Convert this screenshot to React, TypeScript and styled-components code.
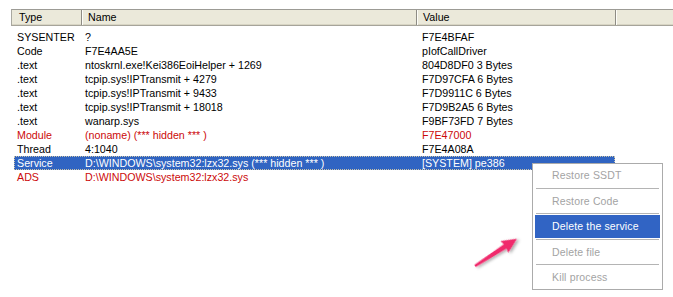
import React from "react";
import styled, { createGlobalStyle } from "styled-components";

const GlobalStyle = createGlobalStyle`
  html, body { margin: 0; padding: 0; background: #ffffff; }
  body { font-family: "Liberation Sans", Arial, sans-serif; }
`;

const Page = styled.div`
  position: relative;
  width: 673px;
  height: 297px;
  overflow: hidden;
  padding-top: 9px;
  box-sizing: border-box;
  background: #fff;
`;

const Header = styled.div`
  display: flex;
  margin-left: 11px;
  height: 15px;
  border-top: 1px solid #9c9b95;
  border-left: 1px solid #a9a8a0;
  border-bottom: 1px solid #a6a49a;
  background: #ebe9da;
  box-shadow: inset 0 -1px 0 #d8d5c4;
`;

const HeaderCell = styled.div<{ $w?: number }>`
  box-sizing: border-box;
  ${(p) => (p.$w ? `width: ${p.$w}px; flex: none;` : "flex: 1;")}
  padding-left: ${(p) => (p.$w === 70 ? 7 : 6)}px;
  font-size: 10.7px;
  line-height: 15px;
  color: #000;
  border-right: ${(p) => (p.$w ? "1px solid #8e8c84" : "none")};
  box-shadow: ${(p) => (p.$w ? "1px 0 0 #fdfdf8" : "none")};
  position: relative;
`;

const Body = styled.div`
  display: flex;
  flex-direction: column;
  padding-top: 4px;
  margin-left: 14px;
  width: 601px;
`;

const Row = styled.div<{ $sel?: boolean; $red?: boolean }>`
  display: grid;
  grid-template-columns: 68px 337px 196px;
  height: 14px;
  line-height: 14px;
  font-size: 10.7px;
  background: ${(p) => (p.$sel ? "#3064c2" : "transparent")};
  color: ${(p) => (p.$sel ? "#fff" : p.$red ? "#cc0a0a" : "#000")};
  outline: ${(p) => (p.$sel ? "1px dotted #c9c3a8" : "none")};
  outline-offset: -1px;
  white-space: nowrap;
`;

const Cell = styled.div`
  padding-left: 3px;
  overflow: visible;
`;

const Menu = styled.div`
  position: absolute;
  left: 532px;
  top: 163px;
  width: 131px;
  box-sizing: border-box;
  background: #fff;
  border: 1px solid #ababab;
  padding: 0 2px;
  display: flex;
  flex-direction: column;
`;

const MenuItem = styled.div<{ $active?: boolean }>`
  height: 22.5px;
  line-height: 22.5px;
  padding-left: 17px;
  font-size: 10.5px;
  letter-spacing: 0.15px;
  color: ${(p) => (p.$active ? "#fff" : "#a3a3a3")};
  background: ${(p) => (p.$active ? "#3164c4" : "transparent")};
  white-space: nowrap;
`;

const Separator = styled.div`
  height: 1px;
  margin: 1px 1px;
  background: #b4b4b4;
`;

const ArrowSvg = styled.svg`
  position: absolute;
  left: 468px;
  top: 230px;
  overflow: visible;
`;

type R = { t: string; n: string; v: string; red?: boolean; sel?: boolean };

const rows: R[] = [
  { t: "SYSENTER", n: "?", v: "F7E4BFAF" },
  { t: "Code", n: "F7E4AA5E", v: "pIofCallDriver" },
  { t: ".text", n: "ntoskrnl.exe!Kei386EoiHelper + 1269", v: "804D8DF0 3 Bytes" },
  { t: ".text", n: "tcpip.sys!IPTransmit + 4279", v: "F7D97CFA 6 Bytes" },
  { t: ".text", n: "tcpip.sys!IPTransmit + 9433", v: "F7D9911C 6 Bytes" },
  { t: ".text", n: "tcpip.sys!IPTransmit + 18018", v: "F7D9B2A5 6 Bytes" },
  { t: ".text", n: "wanarp.sys", v: "F9BF73FD 7 Bytes" },
  { t: "Module", n: "(noname) (*** hidden *** )", v: "F7E47000", red: true },
  { t: "Thread", n: "4:1040", v: "F7E4A08A" },
  {
    t: "Service",
    n: "D:\\WINDOWS\\system32:lzx32.sys (*** hidden *** )",
    v: "[SYSTEM] pe386",
    sel: true,
  },
  { t: "ADS", n: "D:\\WINDOWS\\system32:lzx32.sys", v: "", red: true },
];

const menuItems = [
  { label: "Restore SSDT" },
  { label: "Restore Code" },
  { label: "Delete the service", active: true },
  { label: "Delete file" },
  { label: "Kill process" },
];

export default function App() {
  return (
    <>
      <GlobalStyle />
      <Page>
        <Header>
          <HeaderCell $w={70}>Type</HeaderCell>
          <HeaderCell $w={335}>Name</HeaderCell>
          <HeaderCell $w={199}>Value</HeaderCell>
          <HeaderCell />
        </Header>
        <Body>
          {rows.map((r, i) => (
            <Row key={i} $sel={r.sel} $red={r.red}>
              <Cell>{r.t}</Cell>
              <Cell>{r.n}</Cell>
              <Cell>{r.v}</Cell>
            </Row>
          ))}
        </Body>
        <Menu>
          {menuItems.map((m, i) => (
            <React.Fragment key={m.label}>
              {i > 0 && <Separator />}
              <MenuItem $active={m.active}>{m.label}</MenuItem>
            </React.Fragment>
          ))}
        </Menu>
        <ArrowSvg width="60" height="44" viewBox="0 0 60 44">
          <defs>
            <filter id="sh" x="-30%" y="-30%" width="160%" height="160%">
              <feDropShadow dx="1.5" dy="2" stdDeviation="1.5" floodColor="#000" floodOpacity="0.35" />
            </filter>
          </defs>
          <g transform="translate(7 36) rotate(-33)" filter="url(#sh)">
            <polygon
              points="0,-1.3 36,-2.6 35,-7 50,0 35,7 36,2.6 0,1.3"
              fill="#f02c6c"
            />
          </g>
        </ArrowSvg>
      </Page>
    </>
  );
}
